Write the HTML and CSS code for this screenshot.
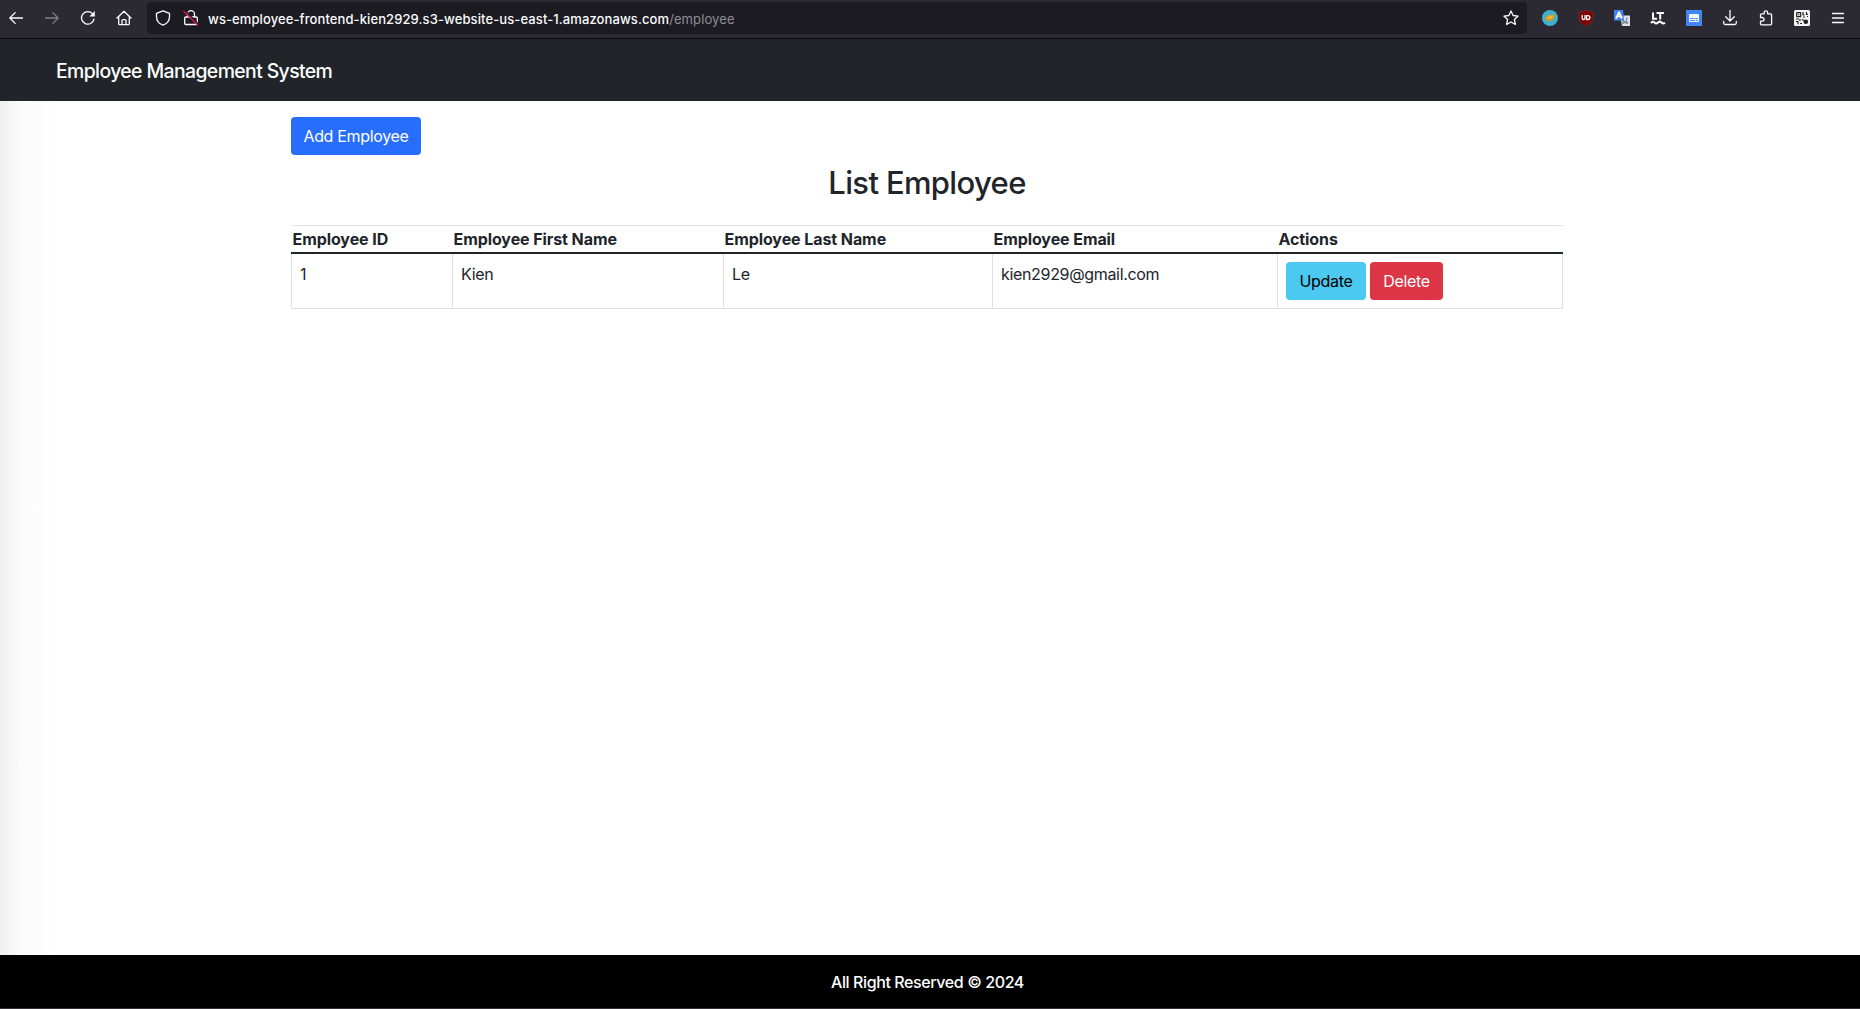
FILE: index.html
```html
<!DOCTYPE html>
<html lang="en">
<head>
<meta charset="utf-8">
<title>Employee Management System</title>
<link rel="stylesheet" href="styles.css">
</head>
<body>
<div class="toolbar">
  <div class="nav-buttons">
    <svg class="icon" viewBox="0 0 16 16"><path d="M14.500 8H1.800M7.200 2.600L1.800 8l5.400 5.400"/></svg>
    <svg class="icon dim" viewBox="0 0 16 16"><path d="M1.500 8h12.700M8.800 2.600L14.200 8l-5.400 5.400"/></svg>
    <svg class="icon" viewBox="0 0 16 16"><path d="M14 9.200A6.300 6.300 0 1 1 12.500 3.600L13.500 4.600"/><path class="solid" d="M14.800 1v5.500H9.300z"/></svg>
    <svg class="icon" viewBox="0 0 16 16"><path d="M1 8l7-6.700L15 8M2.700 6.700v7q0 1 1 1h8.600q1 0 1-1v-7M6 14.500v-3.800q0-1 1-1h2q1 0 1 1v3.800"/></svg>
  </div>
  <div class="url-bar">
    <svg class="icon" viewBox="0 0 16 16"><path d="M8 .8l6.500 2.600v3.100c0 4-2.500 7.300-6.500 8.700C4 13.800 1.500 10.500 1.500 6.500V3.400z"/></svg>
    <svg class="icon" viewBox="0 0 16 16"><path d="M4.500 6.500V4.200a3.500 3.500 0 0 1 7 0v2.600M2.700 7h10.600q1 0 1 1v5.500q0 1-1 1H2.700q-1 0-1-1V8q0-1 1-1z"/><path class="gap" d="M2 .5L15.500 14"/><path class="slash" d="M.7 1.300L14.500 15"/></svg>
    <span class="url"><span class="domain">ws-employee-frontend-kien2929.s3-website-us-east-1.amazonaws.com</span><span class="path">/employee</span></span>
    <svg class="icon star" viewBox="0 0 16 16"><path d="M8 .9l2.100 4.600 5 .6-3.700 3.400 1 5L8 12l-4.400 2.500 1-5L.9 6.100l5-.6z"/></svg>
  </div>
  <div class="extensions">
    <svg class="icon" viewBox="0 0 16 16"><circle class="sea" cx="8" cy="8" r="8"/><path class="fish" d="M3 8.500Q4 4.500 9 5q2-1.500 3 0l2 1-2 1.500q0 3.500-4.500 3.500Q4 11 3 8.500z"/><path class="fin" d="M5 8q3-3 6-1-2 2-6 1z"/></svg>
    <svg class="icon" viewBox="0 0 16 16"><path class="shield" d="M8 .3Q11 2 15 2v6q0 5-7 8-7-3-7-8V2q4 0 7-1.700z"/><path class="mark" d="M4.200 5.500v2.800q0 1.200 1.400 1.200T7 8.300V5.500M8.600 5.700h1.300q2 0 2 1.900t-2 1.900H8.600z"/></svg>
    <svg class="icon" viewBox="0 0 16 16"><path class="sheet" d="M6 5.500h10V16H8z"/><path class="blue" d="M0 0h9l1 10.500H0z"/><path class="mark heavy" d="M2.300 8L5 2.200 7.700 8M3.300 6.300h3.500"/><path class="glyph" d="M8 12h6M9 8.500q0 5 4.500 5M13 8q-1 5-5 6"/></svg>
    <svg class="icon" viewBox="0 0 16 16"><path class="bold" d="M3 2.500v6.200h4M6.500 3h7.500M10.200 3v6.500"/><path class="bold" d="M1 13.200q1.800-2.400 3.500-.7t3.500 0 3.500 0 3.500.2"/></svg>
    <svg class="icon" viewBox="0 0 16 16"><path class="blue" d="M0 0h16v16H0z"/><rect class="white" x="3" y="4" width="10" height="8" rx=".8"/><path class="lines" d="M4 8.500h3.500M8.500 8.500H12M4 10.500h5M10 10.500h2"/></svg>
    <svg class="icon" viewBox="0 0 16 16"><path d="M8 .5v10.300M3.700 6.800L8 11l4.300-4.200M1.700 11.500V13q0 1.500 1.500 1.500h9.600q1.500 0 1.500-1.500v-1.500"/></svg>
    <svg class="icon" viewBox="0 0 16 16"><path d="M2.500 7.500V4.800q0-1 1-1h2.700V2.500a1.700 1.700 0 0 1 3.400 0v1.300h3q1 0 1 1v9q0 1-1 1H3.500q-1 0-1-1v-2.600H4.200a1.700 1.700 0 0 0 0-3.700z"/></svg>
    <svg class="icon" viewBox="0 0 16 16"><rect class="white" width="16" height="16" rx="1.500"/><path class="qr" d="M2.700 2.700h4v4h-4zM4.300 4.700h1M9 2v3h1.500M12.500 2v2.500H14M9 7h2M13 6.500h1M2 9h3M6 9v2M2 11.500h2v2.700M6 13.500h2M8 9.500l2 1"/><circle class="black" cx="11.800" cy="11.700" r="2.300"/></svg>
    <svg class="icon" viewBox="0 0 16 16"><path d="M2.500 3.500h11M2.500 8h11M2.500 12.500h11"/></svg>
  </div>
</div>
<header class="navbar"><a class="brand">Employee Management System</a></header>
<main class="content">
  <div class="container">
    <button class="btn btn-primary">Add Employee</button>
    <h2 class="heading">List Employee</h2>
    <table class="table">
      <colgroup><col class="col-id"><col class="col-first"><col class="col-last"><col class="col-email"><col class="col-actions"></colgroup>
      <thead>
        <tr><th>Employee ID</th><th>Employee First Name</th><th>Employee Last Name</th><th>Employee Email</th><th>Actions</th></tr>
      </thead>
      <tbody>
        <tr><td>1</td><td>Kien</td><td>Le</td><td>kien2929@gmail.com</td><td><div class="actions"><button class="btn btn-info">Update</button><button class="btn btn-danger">Delete</button></div></td></tr>
      </tbody>
    </table>
  </div>
</main>
<footer class="footer">All Right Reserved © 2024</footer>
</body>
</html>
```
FILE: styles.css
```css
* { box-sizing: border-box; }
body {
  margin: 0;
  height: 1009px;
  display: flex;
  flex-direction: column;
  font-family: Inter, "Liberation Sans", sans-serif;
  font-size: 16px;
  line-height: 24px;
  letter-spacing: -0.33px;
  color: #212529;
  background: #fff;
}
.toolbar {
  height: 39px;
  display: flex;
  align-items: center;
  padding: 0 14px 3px 8px;
  background: #2b2a33;
  border-bottom: 1px solid #0c0c0d;
}
.icon {
  width: 16px;
  height: 16px;
  flex: none;
  fill: none;
  stroke: #fbfbfe;
  stroke-width: 1.3;
  stroke-linecap: round;
  stroke-linejoin: round;
}
.dim { opacity: .4; }
.solid { fill: #fbfbfe; stroke: none; }
.nav-buttons { display: flex; gap: 20px; }
.url-bar {
  flex: 1;
  height: 32px;
  margin: 0 15px;
  padding: 0 8px;
  display: flex;
  align-items: center;
  background: #1c1b22;
  border-radius: 4px;
  gap: 12px;
}
.url {
  flex: 1;
  margin-left: -3px;
  padding-top: 2px;
  font-size: 13px;
  letter-spacing: .1px;
}
.domain { color: #fbfbfe; font-weight: 500; }
.path { color: #8f8e95; }
.gap { stroke: #1c1b22; }
.slash { stroke: #e2164f; }
.extensions { display: flex; gap: 20px; }
.sea { fill: #3fb1cf; stroke: none; }
.fish { fill: #d99a2b; stroke: none; }
.fin { fill: #ffc53a; stroke: none; }
.shield { fill: #800000; stroke: #7a3535; stroke-width: .6; }
.mark { stroke: #fff; }
.heavy { stroke-width: 1.8; }
.sheet { fill: #dde0e4; stroke: none; }
.blue { fill: #4285f4; stroke: none; }
.glyph { stroke: #607d8b; stroke-width: 1; }
.bold { stroke-width: 2; stroke-linecap: butt; stroke-linejoin: miter; }
.white { fill: #f4f4f4; stroke: none; }
.lines { stroke: #4285f4; stroke-width: .9; stroke-linecap: butt; }
.qr { stroke: #222; stroke-width: 1.2; stroke-linecap: butt; }
.black { fill: #222; stroke: none; }
.navbar {
  height: 62px;
  padding: 17px 56px 0;
  background: #212529;
}
.brand {
  font-size: 19.4px;
  line-height: 30px;
  font-weight: 500;
  letter-spacing: -0.6px;
  color: #fff;
}
.content {
  flex: 1;
  padding-top: 16px;
  background: linear-gradient(to right, #f0f0f0, #fbfbfb 20px, #fff 55px);
}
.container { width: 1272px; margin-left: 291px; }
.btn {
  height: 38px;
  padding: 0;
  border: 0;
  border-radius: 4px;
  font: inherit;
  letter-spacing: inherit;
  white-space: nowrap;
  color: #fff;
}
.btn-primary { display: block; width: 130px; background: #276efd; }
.btn-info { width: 80px; color: #000; background: #4cc9f0; }
.btn-danger { width: 73px; background: #dc3545; }
.heading {
  margin: 9px 0 0;
  font-size: 31px;
  line-height: 38px;
  font-weight: 500;
  letter-spacing: -0.65px;
  text-align: center;
}
.table {
  width: 1272px;
  margin-top: 23px;
  table-layout: fixed;
  border-collapse: collapse;
}
.col-id { width: 161px; }
.col-first { width: 271px; }
.col-last { width: 269px; }
.col-email { width: 285px; }
.table th {
  height: 27px;
  padding: 1px;
  text-align: left;
  font-weight: 700;
  letter-spacing: -0.08px;
  border-top: 1px solid #dee2e6;
  border-bottom: 2px solid #212529;
}
.table td {
  padding: 8px;
  vertical-align: top;
  border: 1px solid #dee2e6;
}
.actions { display: flex; gap: 4px; }
.footer {
  height: 54px;
  padding: 15px 5px 0 0;
  text-align: center;
  font-weight: 500;
  letter-spacing: -0.4px;
  color: #fff;
  background: #000;
  border-bottom: 1px solid #332f33;
}
```
